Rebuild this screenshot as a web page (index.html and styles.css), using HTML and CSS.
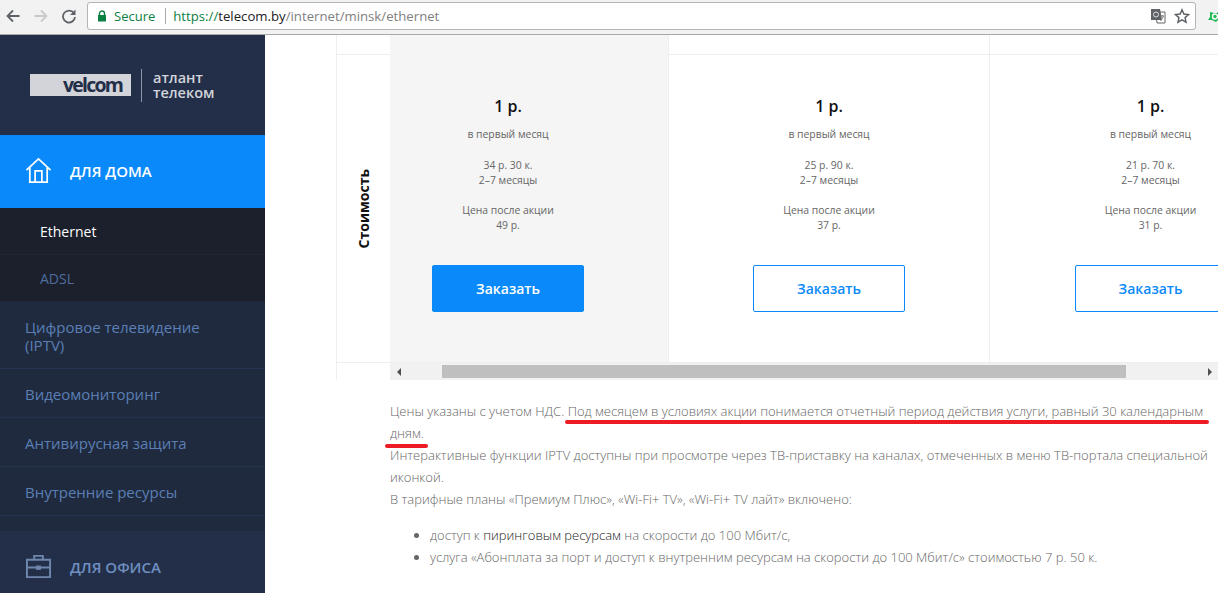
FILE: index.html
```html
<!DOCTYPE html>
<html lang="en">
<head>
  <meta charset="UTF-8" />
  <title>Ethernet</title>
  <link rel="stylesheet" href="styles.css">
</head>
<body>
  <div class="toolbar">
    <svg class="nav-icon" viewBox="0 0 16 16"><path d="M14.5 8H3M8 2.5L2.5 8 8 13.5" fill="none" stroke="#5f6368" stroke-width="1.8"/></svg>
    <svg class="nav-icon" viewBox="0 0 16 16"><path d="M1.5 8H13M8 2.5L13.5 8 8 13.5" fill="none" stroke="#c9c9c9" stroke-width="1.8"/></svg>
    <svg class="nav-icon" viewBox="0 0 16 16"><path d="M13 5.2A6 6 0 1 0 14 9" fill="none" stroke="#5f6368" stroke-width="1.8"/><path d="M14.5 1.5V7H9z" fill="#5f6368"/></svg>
    <div class="omnibox">
      <svg class="lock" viewBox="0 0 10 12"><path d="M2.5 5V3.5a2.5 2.5 0 0 1 5 0V5" fill="none" stroke="#0b8043" stroke-width="1.4"/><rect x="1" y="5" width="8" height="6.5" fill="#0b8043"/></svg>
      <span class="secure">Secure</span>
      <span class="url"><span class="scheme">https://</span><span class="host">telecom.by</span>/internet/minsk/ethernet</span>
      <svg class="translate" viewBox="0 0 16 16"><path d="M6 4h9v11H7z" fill="#fff" stroke="#666"/><path d="M1 1h9l2 11H1z" fill="#5f6368"/><circle cx="6" cy="6.500" r="2.500" fill="none" stroke="#ddd"/><path d="M10 8h4M12 7v1.500M10.500 13l3-4.500" stroke="#777" fill="none"/></svg>
      <svg class="star" viewBox="0 0 16 16"><path d="M8 1.800l1.900 4.200 4.600.5-3.400 3.100.9 4.600L8 11.900l-4 2.300.9-4.600L1.500 6.500l4.600-.5z" fill="none" stroke="#5f6368" stroke-width="1.500"/></svg>
    </div>
    <svg class="ext" viewBox="0 0 16 16"><path d="M1 12l2-3V4l4 1h3l4-3 1 8-3 1-3 3-4-2z" fill="#1db954"/><circle cx="8" cy="8.500" r="2.500" fill="none" stroke="#fff" stroke-width="1.500"/></svg>
  </div>

  <div class="layout">
    <aside class="sidebar">
      <div class="logo">
        <div class="logo-velcom"><span>velcom</span></div>
        <div class="logo-atlant">атлант<br>телеком</div>
      </div>
      <a class="section active">
        <svg class="section-icon" viewBox="0 0 28 28"><path d="M1.500 13.500L14 2l12.500 11.500M5 11v15h18V11M10.500 26V14.500h7V26" fill="none" stroke="#fff" stroke-width="1.800"/></svg>
        ДЛЯ ДОМА
      </a>
      <a class="sub current">Ethernet</a>
      <a class="sub">ADSL</a>
      <a class="item item-tall">Цифровое телевидение (IPTV)</a>
      <a class="item">Видеомониторинг</a>
      <a class="item">Антивирусная защита</a>
      <a class="item">Внутренние ресурсы</a>
      <div class="item-gap"></div>
      <a class="section">
        <svg class="section-icon" viewBox="0 0 28 28"><path d="M9.500 7V3h9v4M2 7h24v18H2zM2 15h24" fill="none" stroke="#6f86ad" stroke-width="2"/><rect x="11.500" y="13" width="5" height="4.500" fill="#6f86ad"/></svg>
        ДЛЯ ОФИСА
      </a>
    </aside>

    <main class="content">
      <div class="table-wrap">
        <div class="row-top">
          <div class="col-head"></div>
          <div class="col col-a"></div>
          <div class="col col-b"></div>
          <div class="col col-c"></div>
        </div>
        <div class="row-price">
          <div class="col-head"><span class="vertical">Стоимость</span></div>
          <div class="col col-a">
            <div class="price">1 р.</div>
            <p class="note">в первый месяц</p>
            <p class="note">34 р. 30 к.<br>2–7 месяцы</p>
            <p class="note">Цена после акции<br>49 р.</p>
            <a class="order filled">Заказать</a>
          </div>
          <div class="col col-b">
            <div class="price">1 р.</div>
            <p class="note">в первый месяц</p>
            <p class="note">25 р. 90 к.<br>2–7 месяцы</p>
            <p class="note">Цена после акции<br>37 р.</p>
            <a class="order">Заказать</a>
          </div>
          <div class="col col-c">
            <div class="price">1 р.</div>
            <p class="note">в первый месяц</p>
            <p class="note">21 р. 70 к.<br>2–7 месяцы</p>
            <p class="note">Цена после акции<br>31 р.</p>
            <a class="order">Заказать</a>
          </div>
        </div>
        <div class="row-scroll">
          <div class="col-head"></div>
          <div class="scrollbar">
            <span class="arrow arrow-left"></span>
            <div class="scroll-track"><div class="scroll-thumb"></div></div>
            <span class="arrow arrow-right"></span>
          </div>
        </div>
      </div>

      <div class="text">
        <span class="mark mark-one"></span>
        <span class="mark mark-two"></span>
        <p>Цены указаны с учетом НДС. Под месяцем в условиях акции понимается отчетный период действия услуги, равный 30 календарным дням.</p>
        <p>Интерактивные функции IPTV доступны при просмотре через ТВ-приставку на каналах, отмеченных в меню ТВ-портала специальной иконкой.</p>
        <p>В тарифные планы «Премиум Плюс», «Wi-Fi+ TV», «Wi-Fi+ TV лайт» включено:</p>
        <ul>
          <li>доступ к <b>пиринговым ресурсам</b> на скорости до 100 Мбит/с,</li>
          <li>услуга «Абонплата за порт и доступ к внутренним ресурсам на скорости до 100 Мбит/с» стоимостью 7 р. 50 к.</li>
        </ul>
      </div>
    </main>
  </div>
</body>
</html>
```

FILE: styles.css
```css
* {
  box-sizing: border-box;
}

html, body {
  height: 100%;
}

body {
  margin: 0;
  font-family: "Open Sans", sans-serif;
  background: #fff;
  display: flex;
  flex-direction: column;
  overflow: hidden;
}

.toolbar {
  height: 35px;
  flex: none;
  display: flex;
  align-items: center;
  padding: 0 0 2px 5px;
  background: #f2f2f2;
  border-bottom: 1px solid #a8a8a8;
}

.nav-icon {
  width: 16px;
  height: 16px;
  margin-right: 12px;
  flex: none;
}

.nav-icon:nth-child(3) {
  margin-right: 10px;
}

.omnibox {
  width: 1109px;
  height: 28px;
  display: flex;
  align-items: center;
  background: #fff;
  border: 1px solid #b4b4b4;
  border-radius: 3px;
  padding: 0 5px 0 9px;
  font-size: 13px;
  flex: none;
}

.lock {
  width: 10px;
  height: 12px;
  margin-right: 7px;
}

.secure {
  color: #0b8043;
  padding-right: 10px;
  border-right: 1px solid #aaa;
  line-height: 16px;
  margin-right: 7px;
}

.url {
  color: #808080;
  flex: 1;
  font-size: 13.200px;
}

.scheme {
  color: #0b8043;
}

.host {
  color: #222;
}

.translate {
  width: 16px;
  height: 16px;
  margin-right: 8px;
}

.star {
  width: 16px;
  height: 16px;
}

.ext {
  width: 16px;
  height: 16px;
  margin-left: 11px;
  flex: none;
}

.layout {
  flex: 1;
  display: flex;
  min-height: 0;
}

.sidebar {
  width: 265px;
  flex: none;
  background: #232f49;
  overflow: hidden;
}

.logo {
  height: 100px;
  display: flex;
  align-items: center;
  padding-left: 30px;
}

.logo-velcom {
  width: 101px;
  height: 22px;
  background: #d2d4da;
  color: #232f49;
  font-size: 19.500px;
  font-weight: 700;
  letter-spacing: -1.800px;
  line-height: 21px;
  text-align: right;
  padding-right: 9px;
}

.logo-atlant {
  margin-left: 10px;
  padding-left: 11px;
  border-left: 1px solid #8d94a3;
  color: #d2d4da;
  font-size: 14.500px;
  font-weight: 600;
  line-height: 15px;
  height: 33px;
  padding-top: 1px;
}

.section {
  height: 73px;
  display: flex;
  align-items: center;
  padding: 0 0 2px 25px;
  color: #6f8fc0;
  font-size: 15px;
  font-weight: 600;
}

.section.active {
  background: #0a8afa;
  color: #fff;
}

.section-icon {
  width: 27px;
  height: 27px;
  margin-right: 18px;
}

.sub {
  height: 47px;
  display: flex;
  align-items: center;
  padding-left: 40px;
  background: #1b202c;
  border-bottom: 1px solid #1f2535;
  color: #4f6c9c;
  font-size: 14px;
}

.sub.current {
  color: #fff;
}

.item {
  height: 49px;
  display: flex;
  align-items: center;
  padding: 2px 25px 0;
  background: #1f2a3e;
  border-bottom: 1px solid #243350;
  color: #5b7fb5;
  font-size: 15px;
  line-height: 18px;
}

.item-tall {
  height: 67px;
}

.item-gap {
  height: 15px;
  background: #1f2a3e;
}

.content {
  flex: 1;
  min-width: 0;
  overflow: hidden;
  padding-left: 71px;
}

.table-wrap {
  width: 882px;
  overflow: hidden;
  border-left: 1px solid #eee;
}

.row-top, .row-price, .row-scroll {
  display: flex;
}

.row-top {
  height: 20px;
  border-bottom: 1px solid #eee;
}

.row-price {
  height: 308px;
  border-bottom: 1px solid #eee;
}

.col-head {
  width: 53px;
  flex: none;
  display: flex;
  align-items: center;
  justify-content: center;
}

.vertical {
  writing-mode: vertical-rl;
  transform: rotate(180deg);
  font-size: 14px;
  font-weight: 700;
  color: #111;
}

.col {
  flex: none;
  text-align: center;
  font-size: 10.400px;
  color: #666;
  border-right: 1px solid #eee;
  padding-top: 39px;
}

.col-a {
  width: 279px;
  padding-right: 42px;
  background: #f5f5f5;
}

.col-b {
  width: 321px;
}

.col-c {
  width: 321px;
  border-right: 0;
}

.price {
  font-size: 16px;
  font-weight: 600;
  color: #111;
  line-height: 24px;
  margin-bottom: 9px;
}

.note {
  margin: 0 0 15.500px;
  line-height: 15px;
}

.order {
  display: flex;
  align-items: center;
  justify-content: center;
  width: 152px;
  height: 47px;
  margin: 32px auto 0;
  border: 1px solid #0a8afa;
  border-radius: 2px;
  background: #fff;
  color: #0a8afa;
  font-size: 14px;
  font-weight: 600;
}

.order.filled {
  background: #0a8afa;
  color: #fff;
}

.row-scroll {
  height: 17px;
}

.scrollbar {
  flex: 1;
  display: flex;
  align-items: center;
  background: #f1f1f1;
}

.arrow {
  width: 17px;
  flex: none;
  display: flex;
  justify-content: center;
}

.arrow::before {
  content: "";
  border: 4px solid transparent;
}

.arrow-left::before {
  border-right-color: #505050;
  border-left-width: 0;
}

.arrow-right::before {
  border-left-color: #505050;
  border-right-width: 0;
}

.scroll-track {
  flex: 1;
  padding-left: 35px;
  padding-right: 75px;
}

.scroll-thumb {
  height: 13px;
  background: #bfbfbf;
}

.text {
  position: relative;
  padding: 20px 0 0 54px;
  width: 882px;
  font-size: 13px;
  font-weight: 300;
  line-height: 22px;
  color: #666;
}

.text p {
  margin: 0;
}

.text ul {
  margin: 14px 0 0;
  padding-left: 40px;
}

.text b {
  font-weight: 300;
  color: #222;
}

.mark {
  position: absolute;
  height: 4px;
  border-radius: 2px;
  background: #ed1c24;
}

.mark-one {
  left: 229px;
  top: 40px;
  width: 644px;
}

.mark-two {
  left: 49px;
  top: 64px;
  width: 43px;
}
```
